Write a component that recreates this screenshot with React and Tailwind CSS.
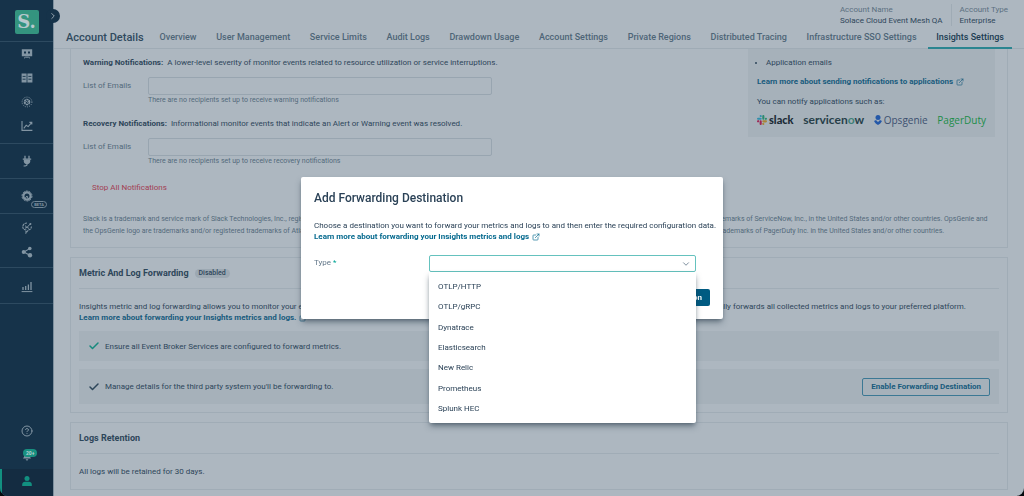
import { useState } from "react";
import clsx from "clsx";
import { Check, ChevronDown, ChevronRight, CircleHelp, ExternalLink } from "lucide-react";

const TABS = [
  "Overview",
  "User Management",
  "Service Limits",
  "Audit Logs",
  "Drawdown Usage",
  "Account Settings",
  "Private Regions",
  "Distributed Tracing",
  "Infrastructure SSO Settings",
  "Insights Settings",
];

const DESTINATIONS = [
  "OTLP/HTTP",
  "OTLP/gRPC",
  "Dynatrace",
  "Elasticsearch",
  "New Relic",
  "Prometheus",
  "Splunk HEC",
];

function Icon({ children }) {
  return (
    <svg viewBox="0 0 12 12" className="size-3" fill="none" stroke="currentColor" aria-hidden="true">
      {children}
    </svg>
  );
}

const MonitorIcon = () => (
  <Icon>
    <path fill="currentColor" stroke="none" fillRule="evenodd" d="M.8 1.2h10.4v7H.8zM3 3.4v2h2v-2zM7 3.4v2h2v-2z" />
    <path d="M3 10.2l1.6-1h2.8l1.6 1" strokeWidth="1" />
  </Icon>
);

const CatalogIcon = () => (
  <Icon>
    <path fill="currentColor" stroke="none" d="M.6 1.6h5v8.8h-5zM6.4 1.6h5v8.8h-5z" />
    <path d="M1.6 4.4h3M1.6 7.2h3M7.4 4.4h3M7.4 7.2h3" stroke="#16334a" strokeWidth="0.9" />
  </Icon>
);

const MeshIcon = () => (
  <Icon>
    <circle cx="6" cy="6" r="4.9" strokeWidth="1" strokeDasharray="1 1.2" />
    <circle cx="6" cy="6" r="2.5" strokeWidth="1.6" strokeDasharray="2.2 .5" />
    <path d="M3.4 7.4l2-2.2 1.2 1.2 2-2.4" strokeWidth="1" />
  </Icon>
);

const ChartIcon = () => (
  <Icon>
    <path d="M1 1v9.4h10.4" strokeWidth="1.1" />
    <path d="M2.8 8.4l2.4-3.2 2 1.4L10.6 2.6M8.4 2.4h2.4v2.2" strokeWidth="1.1" />
  </Icon>
);

const PlugIcon = () => (
  <Icon>
    <path d="M4 .8v3M8 .8v3M1.8 4.2h8.4" strokeWidth="1.3" />
    <path fill="currentColor" stroke="none" d="M2.8 4.4h6.4v1.8a3.2 2.8 0 0 1-6.4 0z" />
    <path d="M6 8.6v1.2c0 1-1 1.2-3.4 1.2" strokeWidth="1.2" />
  </Icon>
);

const GearIcon = () => (
  <Icon>
    <circle cx="6" cy="6" r="3.6" strokeWidth="2.2" />
    <circle cx="6" cy="6" r="5" strokeWidth="1" strokeDasharray="2 1.1" />
    <path d="M6 6l2 4.6M6 6L3.6 9" strokeWidth="1" />
  </Icon>
);

const BrainIcon = () => (
  <Icon>
    <path d="M6 1C3.4 1 1.8 2.8 1.8 5c0 1.8 1.4 2.8 3.2 3v3l2.4-3C9 7.6 10.4 6.6 10.4 4.6" strokeWidth="1.1" strokeDasharray="2.4 .6" />
    <path d="M4 3.6l2 1.8L9.6 1.6M4 6.2l2-.8 2 1" strokeWidth="1" />
    <circle cx="9.4" cy="2" r="1" fill="currentColor" stroke="none" />
  </Icon>
);

const ShareIcon = () => (
  <Icon>
    <path d="M3 6l5.6-3.4M3 6l5.6 3.2" strokeWidth="1.1" />
    <g fill="currentColor" stroke="none">
      <circle cx="2.7" cy="6" r="2" />
      <circle cx="8.8" cy="2.5" r="1.8" />
      <circle cx="9" cy="9.3" r="2.2" />
    </g>
  </Icon>
);

const BarsIcon = () => (
  <Icon>
    <path d="M.6 10.6h10.8" strokeWidth="1" />
    <path d="M2 9V6M4.7 9V5M7.4 9V3.6M10 9V1" strokeWidth="1.3" />
  </Icon>
);

function NavButton({ label, children }) {
  return (
    <button type="button" aria-label={label} className="flex h-6 w-full items-center justify-center text-[#8295a3]">
      {children}
    </button>
  );
}

function Sidebar() {
  return (
    <aside className="flex w-[53px] shrink-0 flex-col bg-[#16334a]">
      <div className="relative flex justify-center border-b border-[#2d4a60] pt-[10px] pb-[7px]">
        <div className="flex size-6 items-center justify-center rounded-xs bg-[#34947f] font-['DejaVu_Serif',serif] text-lg leading-none font-bold text-[#b6c8cd]">
          S.
        </div>
        <button
          type="button"
          aria-label="Expand navigation"
          className="absolute top-[9px] -right-[7px] z-10 flex size-[14px] items-center justify-center rounded-full bg-[#16334a] text-[#a9b7c1]"
        >
          <ChevronRight size={10} />
        </button>
      </div>
      <div className="border-b border-[#2d4a60] pb-[5px]">
        <NavButton label="Mission Control"><MonitorIcon /></NavButton>
        <NavButton label="Catalog"><CatalogIcon /></NavButton>
        <NavButton label="Event Mesh"><MeshIcon /></NavButton>
        <NavButton label="Statistics"><ChartIcon /></NavButton>
      </div>
      <div className="border-b border-[#2d4a60] py-[5px]">
        <NavButton label="Connectors"><PlugIcon /></NavButton>
      </div>
      <div className="relative border-b border-[#2d4a60] py-[5px]">
        <NavButton label="Runtime"><GearIcon /></NavButton>
        <span className="absolute right-[6px] bottom-[5px] rounded-full border border-[#718696] px-0.5 text-[4px] leading-[5px] font-bold text-[#8295a3]">
          BETA
        </span>
      </div>
      <div className="border-b border-[#2d4a60] pt-[2px] pb-[3px]">
        <NavButton label="Designer"><BrainIcon /></NavButton>
        <NavButton label="Sharing"><ShareIcon /></NavButton>
      </div>
      <div className="border-b border-[#2d4a60] pt-[7px] pb-1">
        <NavButton label="Insights"><BarsIcon /></NavButton>
      </div>
      <div className="mt-auto">
        <NavButton label="Help"><CircleHelp size={12} strokeWidth={2} /></NavButton>
        <div className="relative pb-[2px]">
          <NavButton label="Notifications">
            <Icon>
              <path fill="currentColor" stroke="none" d="M2 9.5l1.2-2V5a2.8 2.8 0 0 1 5.6 0v2.5l1.2 2zM4.7 10.2h2.6a1.3 1.3 0 0 1-2.6 0z" />
            </Icon>
          </NavButton>
          <span className="absolute top-[6px] left-[23px] rounded-full bg-[#189080] px-[3px] text-[5px] leading-[8px] font-bold text-[#b6cfd2]">
            20+
          </span>
        </div>
        <button
          type="button"
          aria-label="Account"
          className="flex h-[27px] w-full items-center justify-center border-l-2 border-[#129080] bg-[#142c41] pr-0.5 pb-1 text-[#129080]"
        >
          <Icon>
            <circle cx="6" cy="3.6" r="2.5" fill="currentColor" stroke="none" />
            <path fill="currentColor" stroke="none" d="M1.2 11V9.4c0-1.7 1.3-2.6 2.8-2.6h4c1.5 0 2.8.9 2.8 2.6V11z" />
          </Icon>
        </button>
      </div>
    </aside>
  );
}

function Header() {
  return (
    <header className="border-b border-[#9fabb5] px-3">
      <dl className="flex justify-end pt-1 pr-1 text-[8px] leading-[11px]">
        <div className="pr-2">
          <dt className="text-[#5c7080]">Account Name</dt>
          <dd className="text-[#2d465a]">Solace Cloud Event Mesh QA</dd>
        </div>
        <div className="border-l border-[#9fabb5] pl-2">
          <dt className="text-[#5c7080]">Account Type</dt>
          <dd className="text-[#2d465a]">Enterprise</dd>
        </div>
      </dl>
      <div className="flex items-stretch">
        <h1 className="pt-1 text-[11px] leading-[16px] font-medium text-[#304a5e]">Account Details</h1>
        <nav className="ml-2 flex flex-1 justify-between text-[9px] leading-[12px] font-medium text-[#4e6577]">
          {TABS.map((tab) => (
            <a
              key={tab}
              href="#"
              className={clsx(
                "-mb-px border-b-2 px-2 pt-[5px] pb-[4px]",
                tab === "Insights Settings" ? "border-[#2b8590] text-[#203d53]" : "border-transparent"
              )}
            >
              {tab}
            </a>
          ))}
        </nav>
      </div>
    </header>
  );
}

function EmailField({ id, title, description, hint }) {
  return (
    <section>
      <p className="text-[#2d465a]">
        <strong className="mr-0.5 font-bold">{title}:</strong> {description}
      </p>
      <div className="mt-[9px] grid grid-cols-[65px_344px]">
        <label htmlFor={id} className="pt-[3px] text-[#536a7b]">List of Emails</label>
        <div>
          <input id={id} type="text" className="block h-[18px] w-full rounded-xs border border-[#98a5b0] px-1" />
          <p className="text-[7px] leading-[11px] text-[#536a7b]">{hint}</p>
        </div>
      </div>
    </section>
  );
}

function SlackMark() {
  return (
    <svg viewBox="0 0 24 24" className="size-[10px]" aria-hidden="true">
      <path fill="#9d2453" d="M5 15.2a2.5 2.5 0 1 1-2.5-2.5H5zM6.3 15.2a2.5 2.5 0 0 1 5 0v6.3a2.5 2.5 0 0 1-5 0z" />
      <path fill="#318fad" d="M8.8 5a2.5 2.5 0 1 1 2.5-2.5V5zM8.8 6.3a2.5 2.5 0 0 1 0 5H2.5a2.5 2.5 0 0 1 0-5z" />
      <path fill="#2b8b6d" d="M19 8.8a2.5 2.5 0 1 1 2.5 2.5H19zM17.7 8.8a2.5 2.5 0 0 1-5 0V2.5a2.5 2.5 0 0 1 5 0z" />
      <path fill="#a98437" d="M15.2 19a2.5 2.5 0 1 1-2.5 2.5V19zM15.2 17.7a2.5 2.5 0 0 1 0-5h6.3a2.5 2.5 0 0 1 0 5z" />
    </svg>
  );
}

function ApplicationsBox() {
  return (
    <div className="w-[247px] shrink-0 bg-[#a6b1ba] px-[9px] pt-[8px] pb-[10px] text-[#2d465a]">
      <ul className="list-disc pl-[9px]">
        <li>Application emails</li>
      </ul>
      <a href="#" className="mt-2 flex items-center gap-[3px] font-bold text-[#185b7d]">
        Learn more about sending notifications to applications <ExternalLink size={8} />
      </a>
      <p className="mt-[9px]">You can notify applications such as:</p>
      <div className="mt-[6px] flex items-center justify-between whitespace-nowrap">
        <span className="flex items-center gap-0.5 font-[Lato] text-[11px] leading-[14px] font-black text-[#1b2b36]">
          <SlackMark />
          slack
        </span>
        <span className="font-[Lato] text-[12px] leading-[14px] font-bold text-[#273f49]">
          servicen<span className="text-[#3f8178]">o</span>w
        </span>
        <span className="flex items-center gap-0.5 font-['Open_Sans'] text-[10px] leading-[14px] text-[#3d5070]">
          <svg viewBox="0 0 8 10" className="h-[10px] w-2" fill="#2458a8" aria-hidden="true">
            <circle cx="4" cy="2.5" r="2.5" />
            <path d="M0 6l2-1c.5.9 1.200 1.400 2 1.900.8-.5 1.500-1 2-1.900l2 1C7 8 5.700 9.200 4 10 2.300 9.200 1 8 0 6z" />
          </svg>
          Opsgenie
        </span>
        <span className="font-['Open_Sans'] text-[10px] leading-[14px] text-[#1c8d49]">PagerDuty</span>
      </div>
    </div>
  );
}

function NotificationsPanel() {
  return (
    <section className="border border-t-0 border-[#a0acb6] px-3 pb-[10px]">
      <div className="flex items-start justify-between">
        <div className="space-y-3 pt-[8px]">
          <EmailField
            id="warning-emails"
            title="Warning Notifications"
            description="A lower-level severity of monitor events related to resource utilization or service interruptions."
            hint="There are no recipients set up to receive warning notifications"
          />
          <EmailField
            id="recovery-emails"
            title="Recovery Notifications"
            description="Informational monitor events that indicate an Alert or Warning event was resolved."
            hint="There are no recipients set up to receive recovery notifications"
          />
        </div>
        <ApplicationsBox />
      </div>
      <button type="button" className="mt-[15px] ml-[9px] block text-[#a23e53]">Stop All Notifications</button>
      <p className="mt-[20px] overflow-hidden text-[7px] leading-[12px] whitespace-nowrap text-[#536a7b]">
        Slack is a trademark and service mark of Slack Technologies, Inc., registered in the U.S.A. and in other countries.
        ServiceNow, Now Platform and the ServiceNow logo are all trademarks and/or registered trademarks of ServiceNow,
        Inc., in the United States and/or other countries. OpsGenie and
        <br />
        the OpsGenie logo are trademarks and/or registered trademarks of Atlassian Pty Limited and its subsidiaries both in
        the United States and in many other countries. PagerDuty and the PagerDuty logo are all trademarks of PagerDuty
        Inc. in the United States and/or other countries.
      </p>
    </section>
  );
}

function ForwardingPanel() {
  return (
    <section className="border border-[#a0acb6] px-2 pb-2 text-[#2d465a]">
      <h2 className="flex items-center gap-[6px] border-b border-[#a0acb6] py-[8px] text-[9px] leading-[14px] font-bold">
        Metric And Log Forwarding
        <span className="rounded-full bg-[#9ca8b2] px-1 text-[7px] leading-[9px] font-medium">Disabled</span>
      </h2>
      <p className="mt-[12px] overflow-hidden whitespace-nowrap">
        Insights metric and log forwarding allows you to monitor your event broker services with the observability tools
        that your teams already use. Once it is fully set up, Insights automatically forwards all collected metrics and
        logs to your preferred platform.
      </p>
      <a href="#" className="flex items-center gap-[3px] font-bold text-[#185b7d]">
        Learn more about forwarding your Insights metrics and logs. <ExternalLink size={8} />
      </a>
      <div className="mt-2 flex h-[30px] items-center gap-[5px] bg-[#a6b1ba] px-[9px]">
        <Check size={12} strokeWidth={3} className="text-[#168a7d]" />
        Ensure all Event Broker Services are configured to forward metrics.
      </div>
      <div className="mt-2 flex h-[35px] items-center gap-[5px] bg-[#a6b1ba] px-[9px]">
        <Check size={12} strokeWidth={3} />
        Manage details for the third party system you'll be forwarding to.
        <button
          type="button"
          className="ml-auto rounded-xs border border-[#3b7894] px-2 leading-[16px] font-bold text-[#185b7d]"
        >
          Enable Forwarding Destination
        </button>
      </div>
    </section>
  );
}

function DestinationDialog() {
  const [type, setType] = useState("");

  return (
    <div className="fixed inset-0 z-20 flex items-center justify-center">
      <div
        role="dialog"
        aria-modal="true"
        aria-labelledby="dialog-title"
        className="w-[422px] rounded-xs bg-white p-[13px] text-[#2b4257] shadow-md shadow-[#24384880]"
      >
        <h2 id="dialog-title" className="text-[12px] leading-[16px] font-medium">Add Forwarding Destination</h2>
        <p className="mt-[14px] whitespace-nowrap">
          Choose a destination you want to forward your metrics and logs to and then enter the required configuration data.
        </p>
        <a href="#" className="flex items-center gap-[3px] font-bold text-[#04698e]">
          Learn more about forwarding your Insights metrics and logs <ExternalLink size={8} />
        </a>
        <div className="mt-[13px] grid grid-cols-[115px_267px]">
          <label htmlFor="type" className="pt-[2px] text-[#64788a]">
            Type <span className="text-[#00a596]">*</span>
          </label>
          <div className="relative">
            <select
              id="type"
              value={type}
              onChange={(e) => setType(e.target.value)}
              className="block h-[17px] w-full appearance-none rounded-xs border border-[#65c2be] bg-white px-2"
            >
              <option value=""></option>
              {DESTINATIONS.map((name) => (
                <option key={name}>{name}</option>
              ))}
            </select>
            <ChevronDown size={10} className="pointer-events-none absolute top-1 right-[5px] text-[#64788a]" />
            <ul
              role="listbox"
              aria-label="Type"
              className="absolute top-full left-0 flex h-[151px] w-full flex-col rounded-b-xs bg-white py-1 shadow-md shadow-[#24384880]"
            >
              {DESTINATIONS.map((name) => (
                <li
                  key={name}
                  role="option"
                  aria-selected={type === name}
                  onClick={() => setType(name)}
                  className="flex flex-1 items-center px-[9px]"
                >
                  {name}
                </li>
              ))}
            </ul>
          </div>
        </div>
        <div className="mt-[17px] flex justify-end">
          <button type="button" className="rounded-xs bg-[#005b82] px-2 leading-[17px] font-bold text-white">
            Add Destination
          </button>
        </div>
      </div>
    </div>
  );
}

export default function App() {
  return (
    <div className="h-screen bg-[#050a0e] font-[Roboto,sans-serif] text-[8px] leading-[11px]">
      <div className="flex h-full overflow-hidden rounded-b-lg bg-[#adb7c0]">
        <Sidebar />
        <div className="min-w-0 flex-1 border-l border-[#7e909e]">
          <Header />
          <main className="space-y-[9px] px-4">
            <NotificationsPanel />
            <ForwardingPanel />
            <section className="border border-[#a0acb6] px-2 text-[#2d465a]">
              <h2 className="border-b border-[#a0acb6] py-[8px] text-[9px] leading-[14px] font-bold">Logs Retention</h2>
              <p className="py-3">All logs will be retained for 30 days.</p>
            </section>
          </main>
        </div>
      </div>
      <DestinationDialog />
    </div>
  );
}
